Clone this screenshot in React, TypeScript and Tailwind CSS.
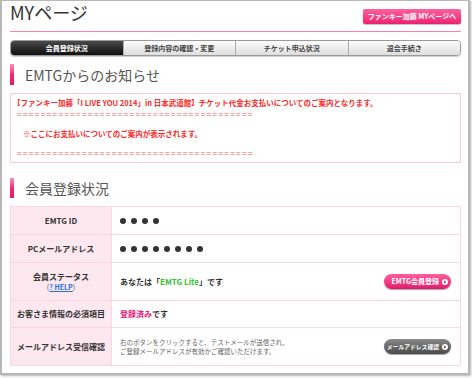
import React from 'react'

const jp = { fontFamily: '"Noto Sans CJK JP", "Noto Sans", sans-serif' }

function Dots({ count }: { count: number }) {
  return (
    <div className="flex gap-[5px]">
      {Array.from({ length: count }).map((_, i) => (
        <span key={i} className="block w-[6px] h-[6px] rounded-full bg-[#333]" />
      ))}
    </div>
  )
}

function SectionHeading({ title, h }: { title: string; h: string }) {
  return (
    <div className={`flex items-center ${h}`}>
      <div className="w-[4px] h-full bg-gradient-to-b from-[#ff8ab6] via-[#f0277a] to-[#e8196a]" />
      <div className="ml-[11px] text-[14px] leading-[16px] text-[#555]">{title}</div>
    </div>
  )
}

function PillButton({ label, dark }: { label: string; dark?: boolean }) {
  return (
    <div
      className={
        'flex items-center justify-end w-[67px] h-[15px] rounded-full pr-[3px] gap-[3px] shadow-[0_1px_1px_rgba(0,0,0,0.35)] ' +
        (dark
          ? 'bg-gradient-to-b from-[#8a8a8a] to-[#4a4a4a]'
          : 'bg-gradient-to-b from-[#ff5c9e] to-[#e0156a]')
      }
    >
      <span className={'text-white font-bold leading-[15px] whitespace-nowrap ' + (dark ? 'text-[5.8px]' : 'text-[7px]')}>{label}</span>
      <span className="flex items-center justify-center w-[6px] h-[6px] rounded-full bg-white">
        <svg width="4" height="4" viewBox="0 0 4 4">
          <path d="M1 0.5 L3.2 2 L1 3.5 Z" fill={dark ? '#555' : '#e0156a'} />
        </svg>
      </span>
    </div>
  )
}

function Row({ label, h, border = true, children }: { label: React.ReactNode; h: string; border?: boolean; children: React.ReactNode }) {
  return (
    <div className={`flex ${h} ${border ? 'border-b border-[#fcd6e1]' : ''}`}>
      <div className="w-[101px] shrink-0 bg-[#fde8ef] border-r border-[#fcd6e1] flex flex-col items-center justify-center text-[8px] font-bold text-[#333] leading-[10px]">
        {label}
      </div>
      <div className="flex-1 flex items-center pl-[8px] pr-[9px]">{children}</div>
    </div>
  )
}

export default function App() {
  const eq = '='.repeat(40)
  return (
    <div style={jp} className="w-[472px] h-[380px] bg-white">
      <div className="w-[470px] h-[375px] border-2 border-t border-[#b8b8b8] bg-white shadow-[1px_1px_2px_rgba(0,0,0,0.3)] pl-[8px] pr-[7px]">
        {/* header */}
        <div className="flex items-start justify-between h-[31px] border-b border-[#ff7eab]">
          <div className="mt-[2px] text-[18px] leading-[18px] text-[#333]">MYページ</div>
          <div className="mt-[8px] w-[98px] h-[15px] rounded-[2px] bg-gradient-to-b from-[#ff5fa0] to-[#ec1c70] shadow-[0_1px_1px_rgba(0,0,0,0.25)] flex items-center justify-center">
            <span className="text-white font-bold text-[7px] leading-[15px] whitespace-nowrap">ファンキー加藤 MYページへ</span>
          </div>
        </div>

        {/* tabs */}
        <div className="mt-[8px] h-[16px] flex rounded-[4px] overflow-hidden border border-[#9a9a9a] shadow-[0_1px_1px_rgba(0,0,0,0.2)]">
          <div className="flex-1 flex items-center justify-center bg-gradient-to-b from-[#4a4a4a] to-[#111] text-white font-bold text-[7px]">会員登録状況</div>
          <div className="flex-1 flex items-center justify-center bg-gradient-to-b from-[#fdfdfd] to-[#dedede] text-[#444] font-bold text-[7px] border-l border-[#aaa]">登録内容の確認・変更</div>
          <div className="flex-1 flex items-center justify-center bg-gradient-to-b from-[#fdfdfd] to-[#dedede] text-[#444] font-bold text-[7px] border-l border-[#aaa]">チケット申込状況</div>
          <div className="flex-1 flex items-center justify-center bg-gradient-to-b from-[#fdfdfd] to-[#dedede] text-[#444] font-bold text-[7px] border-l border-[#aaa]">退会手続き</div>
        </div>

        {/* notices */}
        <div className="mt-[8px]">
          <SectionHeading title="EMTGからのお知らせ" h="h-[21px]" />
        </div>
        <div className="mt-[8px] h-[70px] border border-[#fcc8d8] pl-[2px] pt-[4px] text-[#ff2a2a] font-bold text-[7.5px] leading-[10px]">
          <div className="whitespace-nowrap">【ファンキー加藤「I LIVE YOU 2014」in 日本武道館】チケット代金お支払いについてのご案内となります。</div>
          <div className="mt-[1px] ml-[4px] whitespace-nowrap text-[#ff8a8a] tracking-[1.5px]">{eq}</div>
          <div className="mt-[10px] ml-[10px]">※ここにお支払いについてのご案内が表示されます。</div>
          <div className="mt-[9px] ml-[4px] whitespace-nowrap text-[#ff8a8a] tracking-[1.5px]">{eq}</div>
        </div>

        {/* status */}
        <div className="mt-[15px]">
          <SectionHeading title="会員登録状況" h="h-[20px]" />
        </div>
        <div className="mt-[8px] border border-[#fcd6e1]">
          <Row label="EMTG ID" h="h-[28px]">
            <Dots count={4} />
          </Row>
          <Row label="PCメールアドレス" h="h-[28px]">
            <Dots count={8} />
          </Row>
          <Row
            h="h-[38px]"
            label={
              <>
                <span>会員ステータス</span>
                <span className="font-normal text-[#555] text-[7px]">
                  (<span className="text-[#2a6fd6] font-bold underline">? HELP</span>)
                </span>
              </>
            }
          >
            <div className="flex-1 text-[8px] font-bold text-[#333]">
              あなたは「<span className="text-[#2fc32f]">EMTG Lite</span>」です
            </div>
            <PillButton label="EMTG会員登録" />
          </Row>
          <Row label="お客さま情報の必須項目" h="h-[27px]">
            <div className="text-[8px] font-bold text-[#333]">
              <span className="text-[#ec127a]">登録済み</span>です
            </div>
          </Row>
          <Row label="メールアドレス受信確認" h="h-[37px]" border={false}>
            <div className="flex-1 text-[6.5px] leading-[9px] text-[#666]">
              <div>右のボタンをクリックすると、テストメールが送信され、</div>
              <div>ご登録メールアドレスが有効かご確認いただけます。</div>
            </div>
            <PillButton label="メールアドレス確認" dark />
          </Row>
        </div>
      </div>
    </div>
  )
}
